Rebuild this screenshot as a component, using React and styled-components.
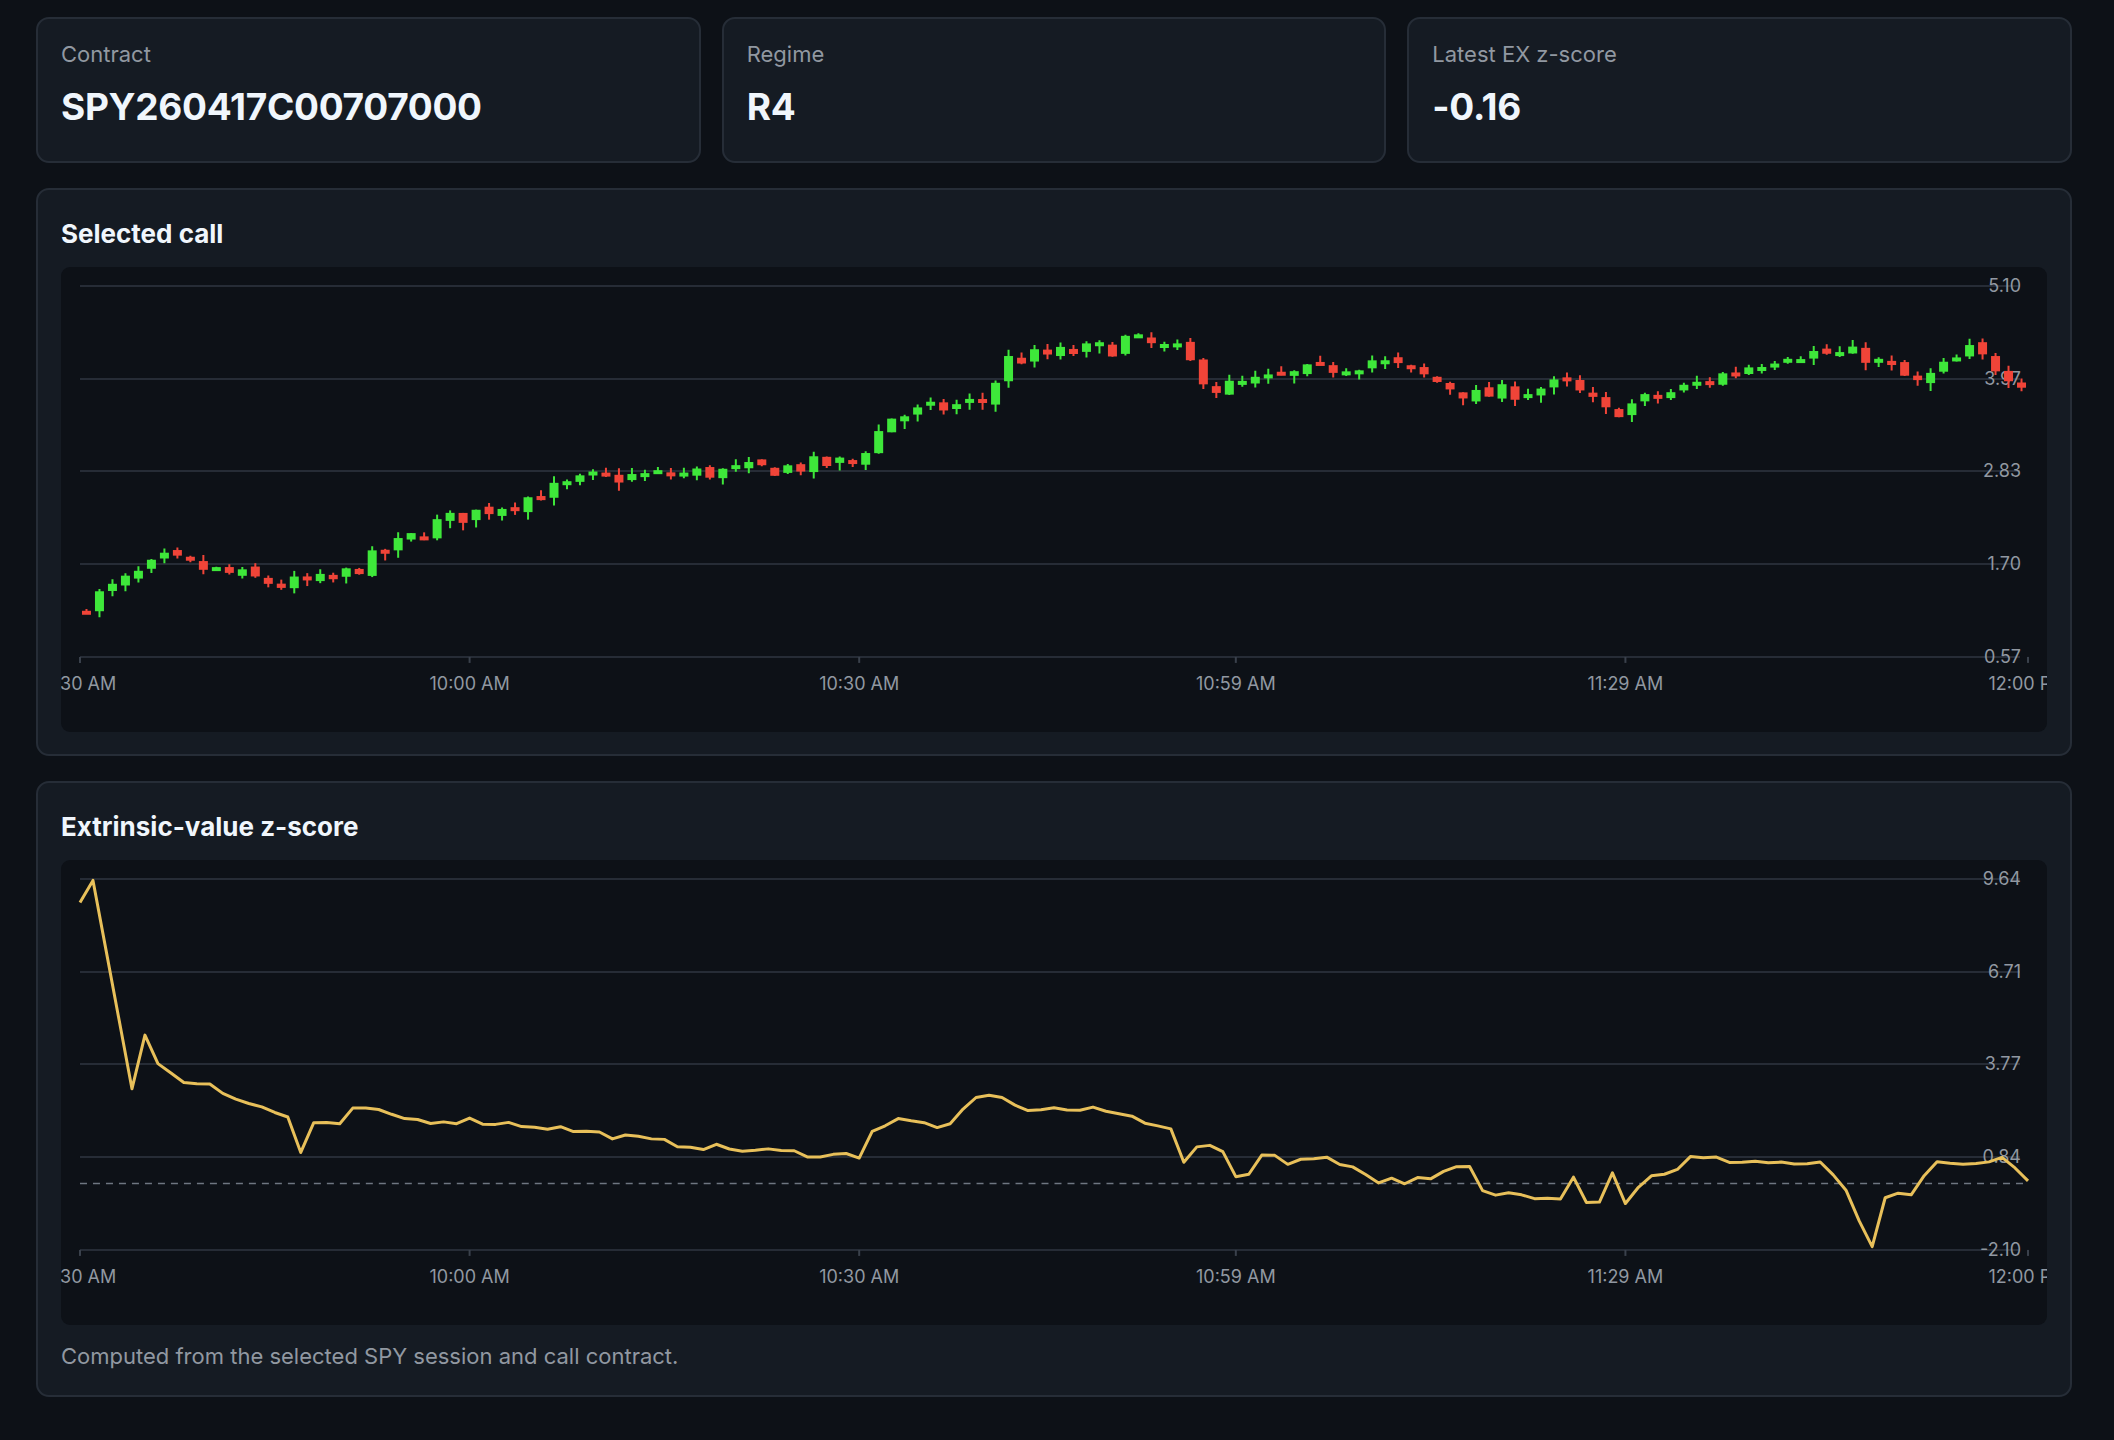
import React from 'react';
import styled, { createGlobalStyle } from 'styled-components';

const Global = createGlobalStyle`
  body { margin: 0; background: #0d1117; font-family: Inter, "Noto Sans", sans-serif; color: #f0f6fc; }
`;

const Page = styled.div`
  padding: 17px 42px 40px 36px;
  display: flex;
  flex-direction: column;
  gap: 25px;
`;

const Stats = styled.div`
  display: grid;
  grid-template-columns: repeat(3, 1fr);
  gap: 21px;
`;

const Card = styled.div`
  background: #151b23;
  border: 2px solid #262d37;
  border-radius: 13px;
  padding: ${(p) => p.$pad || '22px 23px 32px'};
  display: flex;
  flex-direction: column;
`;

const Label = styled.div`
  font-size: 22px;
  color: #9198a1;
  line-height: 1.2;
`;

const Value = styled.div`
  font-size: 37px;
  font-weight: 700;
  margin-top: 17px;
  letter-spacing: -0.3px;
`;

const Title = styled.div`
  font-size: 26px;
  font-weight: 700;
  margin: 8px 0 18px;
`;

const ChartBox = styled.div`
  height: 465px;
  background: #0d1117;
  border-radius: 9px;
  overflow: hidden;
  svg { display: block; }
`;

const Footer = styled.div`
  font-size: 22px;
  color: #9198a1;
  margin-top: 18px;
`;

const W = 1987, X0 = 19, X1 = 1968, GRID = [19, 112, 204, 297, 390];
const TICKS = [['9:30 AM', 0], ['10:00 AM', 30], ['10:30 AM', 60], ['10:59 AM', 89], ['11:29 AM', 119], ['12:00 PM', 150]];
const N = 150;
const xAt = (i) => X0 + (i / N) * (X1 - X0);

let seed = 7;
const rnd = () => { seed = (seed * 16807) % 2147483647; return seed / 2147483647; };
const interp = (pts, i) => {
  for (let k = 0; k < pts.length - 1; k++) {
    const [a, va] = pts[k], [b, vb] = pts[k + 1];
    if (i >= a && i <= b) return va + ((vb - va) * (i - a)) / (b - a);
  }
  return pts[pts.length - 1][1];
};

const pricePts = [[0, 1.15], [7, 1.75], [10, 1.65], [16, 1.45], [20, 1.5], [28, 2.2], [40, 2.75], [52, 2.85], [60, 2.95], [63, 3.5], [70, 3.7], [72, 4.2], [80, 4.35], [81, 4.45], [85, 4.3], [88, 3.85], [92, 3.95], [100, 4.2], [103, 4.05], [108, 3.75], [115, 3.9], [118, 3.55], [124, 3.85], [132, 4.3], [138, 4.25], [142, 3.9], [146, 4.3], [150, 3.95]];
const candles = [];
{
  let prev = 1.1;
  for (let i = 0; i < N; i++) {
    const close = interp(pricePts, i + 1) + (rnd() - 0.5) * 0.22;
    const open = prev + (rnd() - 0.5) * 0.08;
    const hi = Math.max(open, close) + rnd() * 0.08;
    const lo = Math.min(open, close) - rnd() * 0.1;
    candles.push({ open, close, hi, lo });
    prev = close;
  }
}
const pY = (v) => 19 + ((5.1 - v) / (5.1 - 0.57)) * 371;

const zPts = [[0, 8.9], [1, 9.6], [4, 3.0], [5, 4.7], [6, 3.8], [8, 3.2], [10, 3.2], [12, 2.7], [16, 2.1], [17, 1.0], [18, 1.9], [20, 1.8], [21, 2.4], [26, 2.0], [30, 2.0], [36, 1.8], [45, 1.3], [50, 1.1], [58, 0.9], [60, 0.9], [61, 1.7], [63, 2.0], [67, 1.8], [69, 2.7], [71, 2.8], [72, 2.4], [79, 2.3], [84, 1.8], [85, 0.6], [86, 1.2], [88, 1.0], [89, 0.3], [90, 0.3], [91, 0.9], [92, 1.0], [93, 0.6], [96, 0.9], [99, 0.3], [100, 0.1], [104, 0.1], [106, 0.5], [107, 0.5], [108, -0.3], [114, -0.4], [115, 0.3], [116, -0.6], [117, -0.5], [118, 0.4], [119, -0.6], [121, 0.3], [123, 0.4], [124, 0.8], [134, 0.6], [136, -0.2], [138, -2.1], [139, -0.5], [141, -0.3], [143, 0.6], [147, 0.6], [148, 0.9], [150, 0.1]];
const zY = (v) => 19 + ((9.64 - v) / (9.64 + 2.1)) * 371;
const zLine = Array.from({ length: N + 1 }, (_, i) => {
  const v = interp(zPts, i) + (i > 8 ? (rnd() - 0.5) * 0.22 : 0);
  return `${xAt(i).toFixed(1)},${zY(v).toFixed(1)}`;
}).join(' ');

const Axes = ({ labels }) => (
  <>
    {GRID.map((y, k) => (
      <g key={y}>
        <line x1={X0} x2={X1 - 8} y1={y} y2={y} stroke="#262c36" strokeWidth="2" />
        <text x={1961} y={y + 6} fill="#9198a1" fontSize="18" textAnchor="end" fontFamily="Inter, sans-serif">{labels[k]}</text>
      </g>
    ))}
    {TICKS.map(([t, i]) => (
      <g key={t}>
        <line x1={xAt(i)} x2={xAt(i)} y1={390} y2={396} stroke="#3a414c" strokeWidth="2" />
        <text x={xAt(i)} y={423} fill="#9198a1" fontSize="18" textAnchor="middle" fontFamily="Inter, sans-serif">{t}</text>
      </g>
    ))}
  </>
);

const CandleChart = () => (
  <svg width="100%" height="100%" viewBox={`0 0 ${W} 465`}>
    <Axes labels={['5.10', '3.97', '2.83', '1.70', '0.57']} />
    {candles.map((c, i) => {
      const x = xAt(i + 0.5);
      const col = c.close >= c.open ? '#3ee73a' : '#f04438';
      const top = pY(Math.max(c.open, c.close));
      const h = Math.max(4, Math.abs(pY(c.open) - pY(c.close)));
      return (
        <g key={i}>
          <line x1={x} x2={x} y1={pY(c.hi)} y2={pY(c.lo)} stroke={col} strokeWidth="2" />
          <rect x={x - 4.5} y={top} width="9" height={h} fill={col} />
        </g>
      );
    })}
  </svg>
);

const ZChart = () => (
  <svg width="100%" height="100%" viewBox={`0 0 ${W} 465`}>
    <Axes labels={['9.64', '6.71', '3.77', '0.84', '-2.10']} />
    <line x1={X0} x2={X1} y1={zY(0)} y2={zY(0)} stroke="#6e7681" strokeWidth="1.5" strokeDasharray="7 6" />
    <polyline points={zLine} fill="none" stroke="#e8c05a" strokeWidth="3" strokeLinejoin="round" />
  </svg>
);

export default function App() {
  return (
    <Page>
      <Global />
      <Stats>
        <Card><Label>Contract</Label><Value>SPY260417C00707000</Value></Card>
        <Card><Label>Regime</Label><Value>R4</Value></Card>
        <Card><Label>Latest EX z-score</Label><Value>-0.16</Value></Card>
      </Stats>
      <Card $pad="20px 23px 22px">
        <Title>Selected call</Title>
        <ChartBox><CandleChart /></ChartBox>
      </Card>
      <Card $pad="20px 23px 26px">
        <Title>Extrinsic-value z-score</Title>
        <ChartBox><ZChart /></ChartBox>
        <Footer>Computed from the selected SPY session and call contract.</Footer>
      </Card>
    </Page>
  );
}
